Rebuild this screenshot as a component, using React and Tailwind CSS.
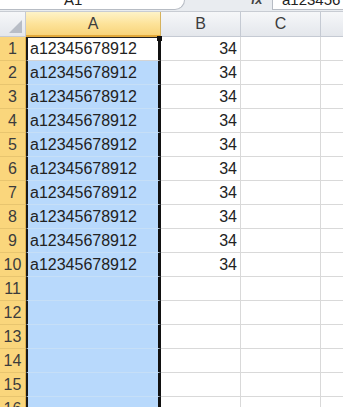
import React from "react";

const ROWS = Array.from({ length: 16 }, (_, i) => i + 1);

function Corner() {
  return (
    <div className="relative h-[25px] border-r border-b border-[#c5cad3] bg-gradient-to-b from-[#f6f7f9] to-[#e4e7ec]">
      <svg className="absolute right-[3px] bottom-[3px]" width="13" height="13" viewBox="0 0 13 13">
        <polygon points="13,0 13,13 0,13" fill="#b8bdc6" />
      </svg>
    </div>
  );
}

export default function App() {
  return (
    <div className="w-[343px] h-[407px] overflow-hidden bg-white text-[#222] font-['Liberation_Sans',Arial,sans-serif]">
      {/* formula bar remainder */}
      <div className="flex h-[12px] bg-[#e9ecf0] border-b border-[#c8ccd3]">
        <div className="relative w-[185px] h-[10px] bg-white rounded-br-[10px] border-b border-r border-[#b7bcc4] overflow-hidden">
          <span className="absolute left-[64px] -top-[9px] text-[15px] leading-[18px] text-[#222]">A1</span>
        </div>
        <div className="relative flex-1">
          <span className="absolute left-[66px] -top-[8px] text-[13px] italic font-bold leading-[16px] text-[#444]">fx</span>
        </div>
        <div className="relative w-[71px] h-[10px] bg-white border-l border-b border-[#b7bcc4] overflow-hidden">
          <span className="absolute left-[9px] -top-[9px] text-[15px] leading-[18px] text-[#222]">a123456</span>
        </div>
      </div>

      <div className="grid grid-cols-[26px_135px_80px_80px_1fr]">
        {/* header row */}
        <Corner />
        <div className="h-[25px] flex items-center justify-center border-r border-b-2 border-r-[#d6b25c] border-b-[#e2a93a] bg-gradient-to-b from-[#fef3c8] via-[#fde39a] to-[#f8d47a] text-[16px] text-[#3c3c3c]">
          A
        </div>
        <div className="h-[25px] flex items-center justify-center border-r border-b border-[#c5cad3] bg-gradient-to-b from-[#f6f7f9] to-[#e4e7ec] text-[16px] text-[#3c3c3c]">
          B
        </div>
        <div className="h-[25px] flex items-center justify-center border-r border-b border-[#c5cad3] bg-gradient-to-b from-[#f6f7f9] to-[#e4e7ec] text-[16px] text-[#3c3c3c]">
          C
        </div>
        <div className="h-[25px] border-b border-[#c5cad3] bg-gradient-to-b from-[#f6f7f9] to-[#e4e7ec]" />

        {ROWS.map((r) => (
          <React.Fragment key={r}>
            <div className="h-[24px] flex items-center justify-center border-r border-b border-r-[#e0b04a] border-b-[#e8c56f] bg-[#fad67c] text-[16px] text-[#3c3c3c]">
              {r}
            </div>
            <div
              className={
                "relative h-[24px] flex items-center pl-[2px] border-b border-l-2 border-r-[3px] border-l-[#1a1a1a] border-r-[#111] text-[16px] " +
                (r === 1 ? "bg-white border-b-[#d4d4d4] border-t" : "bg-[#b8d9fc] border-b-[#c6dff7]")
              }
            >
              {r <= 10 ? "a12345678912" : ""}
              {r === 1 && <span className="absolute -right-[4px] -top-[2px] w-[5px] h-[5px] bg-[#111]" />}
            </div>
            <div className="h-[24px] flex items-center justify-end pr-[3px] border-r border-b border-[#d9d9d9] text-[16px]">
              {r <= 10 ? "34" : ""}
            </div>
            <div className="h-[24px] border-r border-b border-[#d9d9d9]" />
            <div className="h-[24px] border-b border-[#d9d9d9]" />
          </React.Fragment>
        ))}
      </div>
    </div>
  );
}
